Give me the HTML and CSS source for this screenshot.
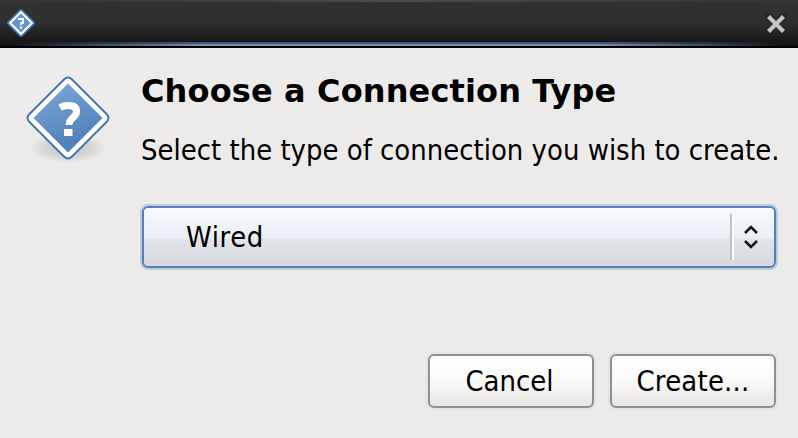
FILE: index.html
```html
<!DOCTYPE html>
<html lang="en">
<head>
<meta charset="utf-8">
<title>Choose a Connection Type</title>
<link rel="stylesheet" href="styles.css">
</head>
<body>
<div class="dialog">
  <header class="titlebar">
    <svg class="app-icon" viewBox="0 0 30 30"><path d="M13 2Q15 0 17 2L28 13Q30 15 28 17L17 28Q15 30 13 28L2 17Q0 15 2 13Z" fill="#3f70ad"/><path d="M15 4L26 15L15 26L4 15Z" fill="#6596cf" stroke="#fff" stroke-width="2"/><path d="M12 11h5v4h-2v2M14 19.500h2" fill="none" stroke="#fff" stroke-width="1.800"/></svg>
    <svg class="close" viewBox="0 0 22 22"><path d="M4 4L18 18M18 4L4 18" stroke="#252525" stroke-width="7" stroke-linecap="square"/><path d="M5 5L17 17M17 5L5 17" stroke="#c5c5c5" stroke-width="4.200" stroke-linecap="square"/></svg>
  </header>
  <main class="content">
    <svg class="icon" viewBox="0 0 96 96">
      <defs>
        <linearGradient id="blue" x1="0.2" y1="0" x2="0.6" y2="1"><stop offset="0" stop-color="#7ba7d8"/><stop offset="1" stop-color="#4b7cb5"/></linearGradient>
        <radialGradient id="shade"><stop offset="0" stop-color="#000" stop-opacity=".22"/><stop offset="1" stop-color="#000" stop-opacity="0"/></radialGradient>
      </defs>
      <ellipse cx="48" cy="78" rx="39" ry="15" fill="url(#shade)"/>
      <path d="M44 9.500Q48 5.500 52 9.500L86.500 44Q90.500 48 86.500 52L52 86.500Q48 90.500 44 86.500L9.500 52Q5.500 48 9.500 44Z" fill="#fff" stroke="#4675b3" stroke-width="2"/>
      <path d="M48 13.500L82.500 48L48 82.500L13.500 48Z" fill="url(#blue)"/>
      <path d="M40 37.500Q43.500 35.500 48.500 35.500Q56.500 35.500 56.500 41.500C56.500 48 49 47.500 49 55" fill="none" stroke="#fff" stroke-width="7"/>
      <path d="M44 59h8.500v7H44z" fill="#fff"/>
    </svg>
    <div class="form">
      <h1>Choose a Connection Type</h1>
      <p><span class="label">Select the type of connection you wish to create.</span></p>
      <div class="select"><span class="value"><span class="label">Wired</span></span><span class="divider"></span>
        <svg class="arrows" viewBox="0 0 16 26"><path d="M2 9L8 3L14 9M2 17L8 23L14 17" fill="none" stroke="#111" stroke-width="2.500"/></svg>
      </div>
    </div>
  </main>
  <footer class="actions"><button><span class="label">Cancel</span></button><button class="create"><span class="label">Create...</span></button></footer>
</div>
</body>
</html>
```
FILE: styles.css
```css
* { box-sizing: border-box; }
body { margin: 0; background: #edebea; color: #000; font: 26px/32px "DejaVu Sans", sans-serif; }
.dialog { width: 798px; height: 438px; overflow: hidden; display: flex; flex-direction: column; }
.titlebar {
  height: 48px; flex: none; display: flex; align-items: center; justify-content: space-between;
  padding: 0 11px 0 6px; border-bottom: 2px solid #000;
  background:
    linear-gradient(90deg, #333, #4b4b4b 50%, #333) 0 0 / 100% 2px no-repeat,
    linear-gradient(90deg, transparent 10px, #46566f 200px, #46566f 600px, transparent 788px) 0 42px / 100% 2px no-repeat,
    linear-gradient(90deg, transparent 10px, #6c8fbb 200px, #6c8fbb 600px, transparent 788px) 0 44px / 100% 2px no-repeat,
    linear-gradient(#313131, #2f2f2f 50%, #161616 92%, #101010);
}
.app-icon { width: 30px; height: 30px; }
.close { width: 22px; height: 22px; margin-top: 2px; }
.content { display: flex; padding: 24px 22px 0 20px; }
.icon { width: 96px; height: 96px; flex: none; margin-right: 26px; margin-top: -2px; }
.form { width: 634px; }
.label { display: inline-block; transform: scaleY(1.08); }
h1, p { margin: 0 0 0 -1px; white-space: nowrap; }
h1 { font: bold 32px/38px "DejaVu Sans", sans-serif; letter-spacing: .13px; }
p { margin-top: 24px; }
.select { height: 62px; margin-top: 40px; display: flex; align-items: center; border: 2px solid #5880b3; border-radius: 6px; box-shadow: 0 0 0 2px #b9cbe1; background: linear-gradient(#f7fbff, #e9edf4 52%, #e1e4ea 54%, #d5d8dd); padding: 0 15px 0 42px; }
.value { flex: 1; letter-spacing: .6px; }
.divider { width: 4px; height: 46px; background: linear-gradient(90deg, #c0c0ba 50%, #fff 50%); }
.arrows { width: 16px; height: 26px; margin-left: 9px; }
.actions { margin-top: 86px; display: flex; justify-content: flex-end; gap: 16px; padding-right: 22px; }
button { width: 166px; height: 54px; padding: 0 3px 0 0; font: inherit; color: inherit; border: 2px solid #928f8c; border-radius: 6px; background: linear-gradient(#fff, #f9f9f8 50%, #e8e6e5); box-shadow: 0 0 0 2px #e6e4e3; }
.create { letter-spacing: .2px; padding: 0; }
```
